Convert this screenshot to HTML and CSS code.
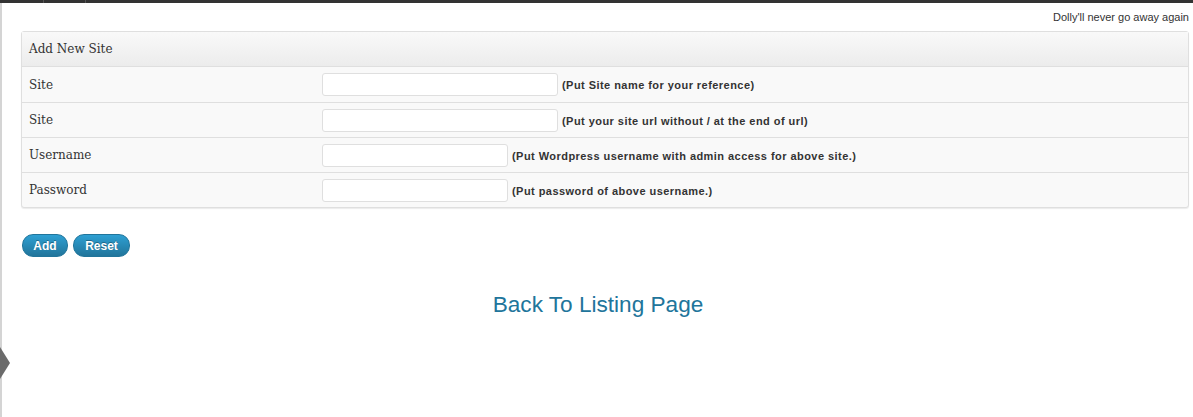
FILE: index.html
```html
<!DOCTYPE html>
<html>
<head>
<meta charset="utf-8">
<link rel="stylesheet" href="styles.css">
</head>
<body>
<div class="topbar"><span class="seg s1"></span><span class="seg s2"></span><span class="seg s3"></span></div>
<div class="page">
  <div class="sidebar"><span class="arrow"></span></div>
  <div class="content">
    <p class="dolly">Dolly'll never go away again</p>
    <table class="widefat">
      <thead>
        <tr><th colspan="2">Add New Site</th></tr>
      </thead>
      <tbody>
        <tr><td class="lbl">Site</td><td><input class="inp wide" type="text"><span class="hint">(Put Site name for your reference)</span></td></tr>
        <tr><td class="lbl">Site</td><td><input class="inp wide" type="text"><span class="hint">(Put your site url without / at the end of url)</span></td></tr>
        <tr><td class="lbl">Username</td><td><input class="inp narrow" type="text"><span class="hint">(Put Wordpress username with admin access for above site.)</span></td></tr>
        <tr><td class="lbl">Password</td><td><input class="inp narrow" type="password"><span class="hint">(Put password of above username.)</span></td></tr>
      </tbody>
    </table>
    <div class="buttons">
      <button class="btn btn-add">Add</button>
      <button class="btn btn-reset">Reset</button>
    </div>
    <div class="back"><a href="#">Back To Listing Page</a></div>
  </div>
</div>
</body>
</html>
```
FILE: styles.css
```css
html, body { margin: 0; padding: 0; background: #fff; }
body { font-family: "Liberation Sans", Arial, sans-serif; color: #333; }
.topbar { height: 3px; background: #333; display: flex; }
.seg { display: block; height: 3px; border-right: 1px solid #555; }
.s1 { width: 43px; }
.s2 { width: 41px; }
.s3 { width: 0; border: none; }
.page { display: flex; position: relative; height: 414px; }
.sidebar { width: 2px; background: #d4d4d4; flex: none; position: relative; }
.arrow { position: absolute; left: 0; top: 344px; width: 0; height: 0; border-top: 16px solid transparent; border-bottom: 16px solid transparent; border-left: 10px solid #6b6b6b; }
.content { flex: 1; padding: 0 4px 0 19px; }
.dolly { margin: 0; padding-top: 9px; height: 19px; text-align: right; font-size: 11px; line-height: 11px; color: #333; }
.widefat { width: 100%; border-collapse: separate; border-spacing: 0; border: 1px solid #dfdfdf; border-radius: 3px; background: #f9f9f9; box-shadow: 0 1px 1px rgba(0,0,0,0.08); }
.widefat th { text-align: left; font-family: "DejaVu Serif", "Liberation Serif", serif; font-weight: normal; font-size: 12px; color: #333; height: 34px; padding: 0 7px; background: linear-gradient(#f9f9f9, #ececec); border-bottom: 1px solid #dfdfdf; }
.widefat td { height: 34px; padding: 0; border-top: 1px solid #dfdfdf; vertical-align: middle; }
.widefat tbody tr:first-child td { border-top: 0; height: 35px; }
.widefat td.lbl { width: 293px; padding-left: 7px; font-family: "DejaVu Serif", "Liberation Serif", serif; font-size: 12px; color: #333; }
.inp { box-sizing: border-box; height: 23px; margin: 0 4px 0 0; border: 1px solid #dfdfdf; border-radius: 3px; background: #fff; vertical-align: middle; padding: 0 4px; }
.inp.wide { width: 236px; }
.inp.narrow { width: 186px; }
.hint { font-size: 11px; font-weight: bold; letter-spacing: 0.45px; color: #333; vertical-align: middle; }
.buttons { display: flex; gap: 5px; margin-top: 26px; margin-left: 1px; }
.btn { box-sizing: border-box; height: 23px; padding: 0; text-align: center; border: 1px solid #21759b; border-radius: 11px; background: linear-gradient(#2e9fd2, #21759b); color: #fff; font-family: "Liberation Sans", Arial, sans-serif; font-weight: bold; font-size: 12px; text-shadow: 0 -1px 0 rgba(0,0,0,0.3); cursor: pointer; }
.btn-add { width: 46px; }
.btn-reset { width: 57px; }
.back { text-align: center; margin-top: 35px; padding-right: 14px; }
.back a { color: #21759b; text-decoration: none; font-size: 22.6px; }
```
